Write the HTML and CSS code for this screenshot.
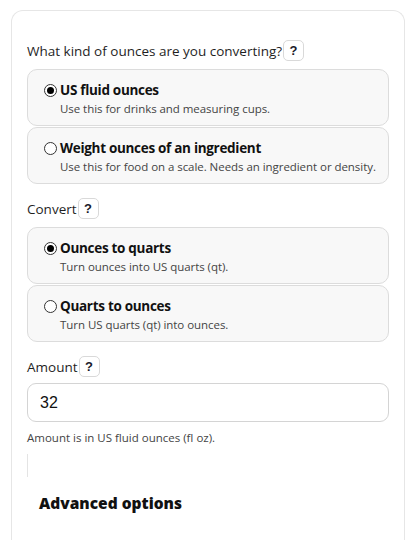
FILE: index.html
```html
<!DOCTYPE html>
<html lang="en">
<head>
<meta charset="utf-8">
<link rel="stylesheet" href="styles.css">
</head>
<body>
<div class="card">
  <div class="q-row"><span class="q-label">What kind of ounces are you converting?</span><button class="help">?</button></div>
  <div class="options">
    <label class="option">
      <span class="radio checked"></span>
      <span class="opt-text"><span class="opt-title">US fluid ounces</span><span class="opt-desc">Use this for drinks and measuring cups.</span></span>
    </label>
    <label class="option">
      <span class="radio"></span>
      <span class="opt-text"><span class="opt-title">Weight ounces of an ingredient</span><span class="opt-desc">Use this for food on a scale. Needs an ingredient or density.</span></span>
    </label>
  </div>
  <div class="q-row"><span class="q-label">Convert</span><button class="help">?</button></div>
  <div class="options">
    <label class="option">
      <span class="radio checked"></span>
      <span class="opt-text"><span class="opt-title">Ounces to quarts</span><span class="opt-desc">Turn ounces into US quarts (qt).</span></span>
    </label>
    <label class="option">
      <span class="radio"></span>
      <span class="opt-text"><span class="opt-title">Quarts to ounces</span><span class="opt-desc">Turn US quarts (qt) into ounces.</span></span>
    </label>
  </div>
  <div class="q-row"><span class="q-label">Amount</span><button class="help">?</button></div>
  <input class="amount" type="text" value="32">
  <p class="hint">Amount is in US fluid ounces (fl oz).</p>
  <div class="rule"></div>
  <h3 class="advanced">Advanced options</h3>
</div>
</body>
</html>
```
FILE: styles.css
```css
html, body { margin: 0; padding: 0; background: #fff; height: 100%; overflow: hidden; }
body { font-family: "Open Sans", "Noto Sans", sans-serif; color: #1a1a1a; }
.card {
  margin: 10px 11px 0 11px;
  border: 1px solid #e6e6e6;
  border-bottom: none;
  border-radius: 12px 12px 0 0;
  padding: 29px 15px 0 15px;
  height: calc(100% - 10px);
  box-sizing: border-box;
}
.q-row { display: flex; align-items: center; height: 21px; }
.q-label { font-size: 13.5px; color: #1f1f1f; }
.help {
  width: 21px; height: 21px; margin-left: 1px; padding: 0;
  border: 1px solid #d9d9d9; border-radius: 5px; background: #fff;
  font-family: "Liberation Sans", Arial, sans-serif; font-weight: 700; font-size: 13px; color: #1a1a2a;
  display: flex; align-items: center; justify-content: center;
}
.options { display: flex; flex-direction: column; gap: 1px; margin: 8px 0 14px 0; }
.option {
  display: flex; align-items: flex-start; height: 57px; box-sizing: border-box;
  border: 1px solid #dcdcdc; border-radius: 10px; background: #f8f8f8;
  padding: 11px 10px 0 16px;
}
.radio {
  width: 11px; height: 11px; border: 1px solid #333; border-radius: 50%;
  background: #fff; margin: 3px 3px 0 0; flex: none; position: relative;
}
.radio.checked::after {
  content: ""; position: absolute; left: 2px; top: 2px; width: 7px; height: 7px; border-radius: 50%; background: #000;
}
.opt-text { display: flex; flex-direction: column; }
.opt-title { font-weight: 700; font-size: 13.5px; color: #111; line-height: 18px; letter-spacing: -0.3px; }
.opt-desc { font-size: 11.5px; color: #444; line-height: 17px; margin-top: 1px; letter-spacing: -0.05px; }
.amount {
  display: block; width: 100%; box-sizing: border-box; height: 39px; margin-top: 6px;
  border: 1px solid #d4d4d4; border-radius: 9px; padding: 0 12px;
  font-family: "Liberation Sans", Arial, sans-serif; font-size: 16px; color: #111; background: #fff;
}
.hint { margin: 8px 0 0 0; font-size: 11.5px; color: #444; line-height: 15px; }
.rule { width: 0; height: 23px; border-left: 1px solid #e4e4e4; margin-top: 9px; }
.advanced { margin: 16px 0 0 12px; font-size: 15.5px; font-weight: 800; color: #111; line-height: 20px; }
```
